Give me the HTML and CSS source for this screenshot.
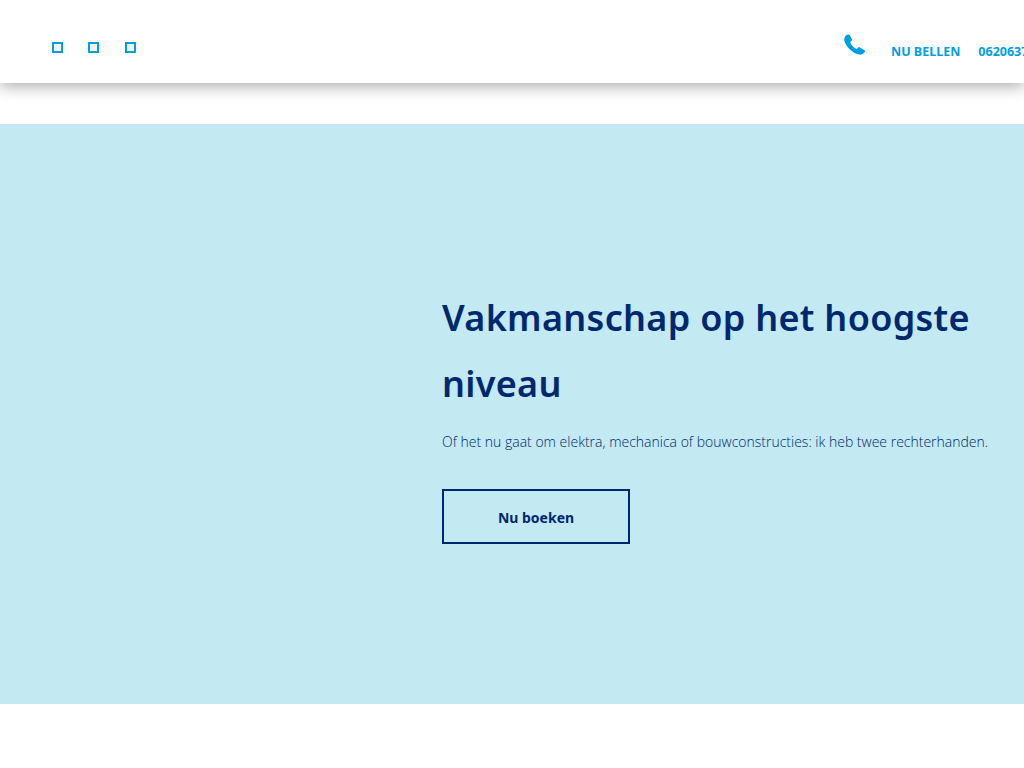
FILE: index.html
```html
<!DOCTYPE html>
<html lang="nl">

<head>
    <meta charset="UTF-8">
    <meta name="viewport" content="width=device-width, initial-scale=1.0">
    <title>Vakmanschap op het hoogste niveau</title>
    <link rel="stylesheet" href="styles.css">
</head>

<body>

    <!-- Header -->
    <header class="site-header">
        <ul class="menu-list">
            <li></li>
            <li></li>
            <li></li>
        </ul>
        <div class="call-bar">
            <svg class="phone-icon" width="22" height="22" viewBox="0 0 22 22">
                <path fill="#009fe3" d="M2 1.5 C3 0.5 4.5 0 5.5 0.8 L8 5.2 C8.4 6 8 6.7 7.2 7.2 L6.2 7.9 C6.8 10.5 9.8 13.8 12.8 15 L14 13.8 C14.6 13.2 15.4 13.2 16 13.6 L20.6 16.3 C21.3 16.8 21.2 17.6 20.6 18.3 C19.4 19.8 17.6 20.8 15.6 20.6 C9 19.8 1.5 12.5 0.3 6.5 C0 4.5 0.8 2.8 2 1.5 Z" />
            </svg>
            <a class="call-link" href="#">NU BELLEN</a>
            <a class="call-link" href="#">0620637112</a>
        </div>
    </header>

    <!-- Hero -->
    <section class="hero">
        <div class="hero-text">
            <h1>Vakmanschap op het hoogste niveau</h1>
            <p>Of het nu gaat om elektra, mechanica of bouwconstructies: ik heb twee rechterhanden.</p>
            <a class="hero-btn" href="#">Nu boeken</a>
        </div>
    </section>

</body>

</html>
```

FILE: styles.css
```css
/* Global Styles */
html,
body {
    overflow: hidden;
}

body {
    margin: 0;
    height: 768px;
    background-color: #fff;
    font-family: 'Open Sans', sans-serif;
}

/* Header */
.site-header {
    display: flex;
    justify-content: space-between;
    height: 83px;
    background-color: #fff;
    box-shadow: 0 3px 15px rgba(0, 0, 0, 0.35);
}

.menu-list {
    display: flex;
    gap: 25.5px;
    list-style: none;
    margin: 0;
    padding: 42px 0 0 51.6px;
}

.menu-list li {
    width: 11px;
    height: 11px;
    box-sizing: border-box;
    border: 2px solid #00a0e0;
    background-color: #f3f5f5;
}

.call-bar {
    display: flex;
    flex: none;
    width: 180px;
    padding-top: 34px;
    white-space: nowrap;
}

.phone-icon {
    flex: none;
    margin-right: 25px;
}

.call-link {
    margin-right: 18px;
    padding-top: 9px;
    font-family: 'Noto Sans', sans-serif;
    font-size: 12.5px;
    line-height: 18px;
    font-weight: 700;
    color: #00a0e0;
    text-decoration: none;
}

/* Hero */
.hero {
    display: flex;
    height: 580px;
    margin-top: 41px;
    background-color: #c3e9f3;
    box-sizing: border-box;
    padding: 161px 0 0 442px;
}

.hero-text {
    width: 560px;
    color: #00286e;
}

.hero-text h1 {
    margin: 0 0 14px;
    font-family: 'Noto Sans', sans-serif;
    font-size: 36px;
    line-height: 66px;
    font-weight: 600;
    letter-spacing: 0.3px;
}

.hero-text p {
    margin: 0 0 36px;
    font-size: 14px;
    line-height: 22px;
    font-weight: 300;
    white-space: nowrap;
}

.hero-btn {
    display: flex;
    align-items: center;
    justify-content: center;
    box-sizing: border-box;
    width: 188px;
    height: 55px;
    padding-top: 2px;
    border: 2px solid #00286e;
    font-family: 'Noto Sans', sans-serif;
    font-size: 14px;
    font-weight: 700;
    color: #00286e;
    text-decoration: none;
}
```
